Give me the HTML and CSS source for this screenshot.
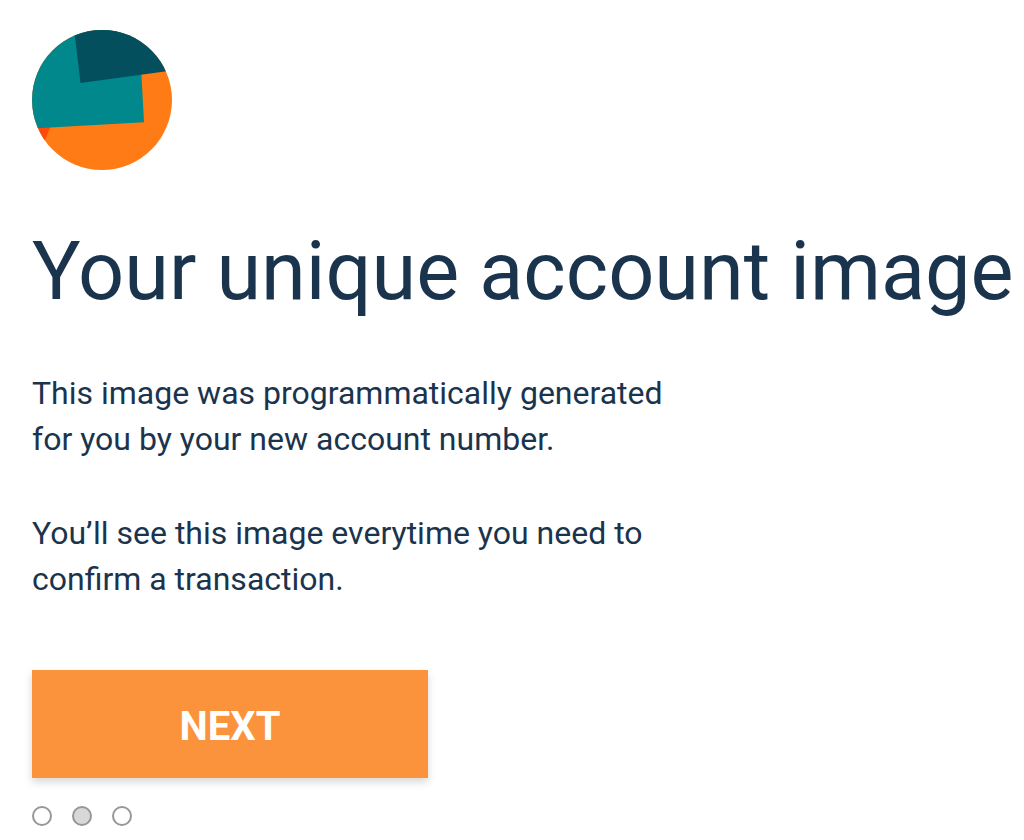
FILE: index.html
```html
<!DOCTYPE html>
<html lang="en">
<head>
<meta charset="utf-8">
<title>Your unique account image</title>
<link rel="stylesheet" href="styles.css">
</head>
<body>
<main class="page">
  <svg class="avatar" viewBox="0 0 140 140" role="img" aria-label="Account image">
    <clipPath id="disc"><circle cx="70" cy="70" r="70"/></clipPath>
    <g clip-path="url(#disc)">
      <rect width="140" height="140" fill="#ff7b15"/>
      <path d="M0 96L19 96L11 114L0 114Z" fill="#ff4a0a"/>
      <path d="M0 0H107L112 92.3L0 98.4Z" fill="#01888c"/>
      <path d="M41 -10L48.5 53L140 40.5V-10Z" fill="#034f5d"/>
    </g>
  </svg>
  <h1 class="title">Your unique account image</h1>
  <p class="text">This image was programmatically generated for you by your new account number.</p>
  <p class="text">You’ll see this image everytime you need to confirm a transaction.</p>
  <button class="next" type="button">NEXT</button>
  <nav class="steps" aria-label="Steps">
    <button class="step" type="button" aria-label="Step 1"></button>
    <button class="step step-current" type="button" aria-label="Step 2" aria-current="step"></button>
    <button class="step" type="button" aria-label="Step 3"></button>
  </nav>
</main>
</body>
</html>
```
FILE: styles.css
```css
body {
  margin: 0;
  background: #fff;
  color: #1b344d;
  font-family: Roboto, sans-serif;
}

.page {
  display: flex;
  flex-direction: column;
  align-items: flex-start;
  padding: 30px 0 14px 32px;
}

.avatar {
  width: 140px;
  height: 140px;
}

.title {
  margin: 54px 0 50px;
  font-size: 81px;
  font-weight: 400;
  line-height: 96px;
  white-space: nowrap;
}

.text {
  max-width: 660px;
  margin: 0 0 48px;
  font-size: 32px;
  line-height: 46px;
}

.next {
  width: 396px;
  max-width: 100%;
  height: 108px;
  margin-top: 20px;
  padding: 6px 0 0;
  border: 0;
  background: #fb923c;
  color: #fff;
  font: 700 40px/48px Roboto, sans-serif;
  box-shadow: 0 4px 8px rgba(0, 0, 0, 0.16);
}

.steps {
  display: flex;
  gap: 20px;
  margin-top: 28px;
}

.step {
  width: 20px;
  height: 20px;
  padding: 0;
  border: 2px solid #979797;
  border-radius: 50%;
  background: #fff;
}

.step-current {
  background: #d8d8d8;
}
```
